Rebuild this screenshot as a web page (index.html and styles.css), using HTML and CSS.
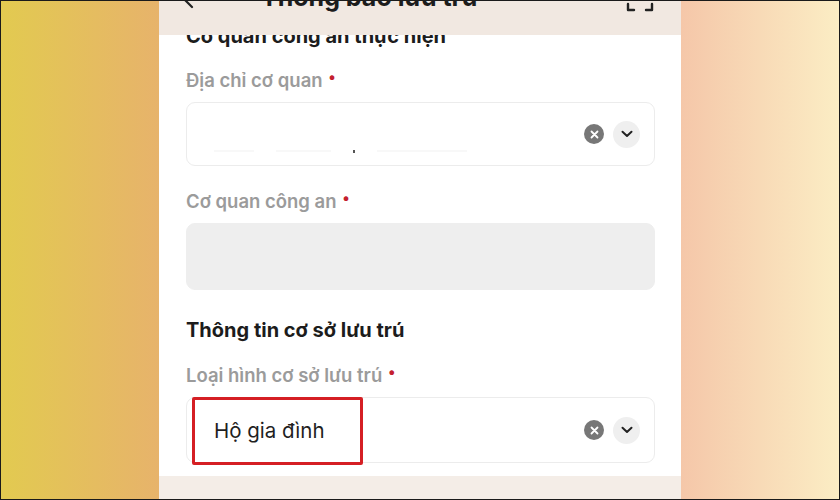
FILE: index.html
```html
<!doctype html>
<html lang="vi">
<head>
    <meta charset="UTF-8">
    <title>Thông báo lưu trú</title>
    <link rel="stylesheet" href="styles.css">
</head>
<body>
<div class="frame">
    <div class="side left"></div>
    <div class="phone">
        <div class="topbar">
            <svg class="back" width="14" height="12" viewBox="0 0 14 12"><path d="M11 -8 L3 0 L9 6" fill="none" stroke="#222" stroke-width="2.2" stroke-linecap="round"/></svg>
            <div class="title">Thông báo lưu trú</div>
            <svg class="expand" width="30" height="14" viewBox="0 0 30 14"><path d="M3 3 V9 H9 M27 3 V9 H21" fill="none" stroke="#222" stroke-width="2.4" stroke-linecap="round" stroke-linejoin="round"/></svg>
        </div>
        <div class="form">
            <h2 class="sec first">Cơ quan công an thực hiện</h2>

            <div class="label">Địa chỉ cơ quan <span class="req">•</span></div>
            <div class="field">
                <div class="blur">
                    <i></i><i class="w2"></i><i class="dot"></i><i class="w3"></i>
                </div>
                <span class="clear">
                    <svg width="9" height="9" viewBox="0 0 9 9"><path d="M1.5 1.5 L7.5 7.5 M7.5 1.5 L1.5 7.5" stroke="#fff" stroke-width="1.8" stroke-linecap="round"/></svg>
                </span>
                <span class="drop">
                    <svg width="12" height="8" viewBox="0 0 12 8"><path d="M1.5 1.8 L6 6 L10.5 1.8" fill="none" stroke="#222" stroke-width="2" stroke-linecap="round" stroke-linejoin="round"/></svg>
                </span>
            </div>

            <div class="label">Cơ quan công an <span class="req">•</span></div>
            <div class="field disabled"></div>

            <h2 class="sec">Thông tin cơ sở lưu trú</h2>

            <div class="label">Loại hình cơ sở lưu trú <span class="req">•</span></div>
            <div class="field sel">
                <div class="value">Hộ gia đình</div>
                <span class="clear">
                    <svg width="9" height="9" viewBox="0 0 9 9"><path d="M1.5 1.5 L7.5 7.5 M7.5 1.5 L1.5 7.5" stroke="#fff" stroke-width="1.8" stroke-linecap="round"/></svg>
                </span>
                <span class="drop">
                    <svg width="12" height="8" viewBox="0 0 12 8"><path d="M1.5 1.8 L6 6 L10.5 1.8" fill="none" stroke="#222" stroke-width="2" stroke-linecap="round" stroke-linejoin="round"/></svg>
                </span>
                <div class="mark"></div>
            </div>
        </div>
        <div class="bottombar"></div>
    </div>
    <div class="side right"></div>
</div>
</body>
</html>
```

FILE: styles.css
```css
*{
    margin: 0;
    padding: 0;
    box-sizing: border-box;
}
body{
    width: 840px;
    height: 500px;
    overflow: hidden;
    font-family: Inter, "Noto Sans", sans-serif;
}
.frame{
    display: flex;
    width: 840px;
    height: 500px;
    border: 1px solid #1a1a1a;
}
.side{
    width: 158px;
}
.side.left{
    background: linear-gradient(to right, #e2ca50, #e7b36b);
}
.side.right{
    background: linear-gradient(to right, #f5c7a9, #fbedc4);
}
.phone{
    width: 522px;
    background: #fff;
    position: relative;
    display: flex;
    flex-direction: column;
}
.topbar{
    position: absolute;
    left: 0;
    top: 0;
    width: 100%;
    height: 34px;
    background: #f1e8e1;
    z-index: 5;
}
.topbar .back{
    position: absolute;
    left: 24px;
    top: 0;
}
.topbar .title{
    position: absolute;
    left: 102px;
    top: -19px;
    font-size: 25px;
    font-weight: 700;
    color: #1c1c1c;
}
.topbar .expand{
    position: absolute;
    left: 466px;
    top: 0;
}
.form{
    flex: 1;
    padding: 24px 26px 0 27px;
}
.sec{
    font-size: 20px;
    font-weight: 700;
    color: #1c1c1c;
    line-height: 22px;
    margin-top: 29px;
}
.sec.first{
    margin-top: 0;
}
.label{
    font-size: 18.5px;
    font-weight: 600;
    color: #9b9b9b;
    line-height: 22px;
    margin-top: 24px;
}
.sec.first + .label{
    margin-top: 22px;
}
.sec + .label{
    margin-top: 23px;
}
.req{
    color: #c4202e;
    font-size: 15px;
    position: relative;
    top: -5px;
    margin-left: 1px;
}
.field{
    margin-top: 9px;
    height: 64px;
    border: 1px solid #ececec;
    border-radius: 9px;
    display: flex;
    align-items: center;
    padding: 0 14px 0 27px;
    position: relative;
}
.field.disabled{
    background: #eeeeee;
    border-color: #eeeeee;
    height: 67px;
}
.field.sel{
    height: 66px;
}
.blur{
    flex: 1;
    display: flex;
    gap: 22px;
    align-items: center;
    margin-top: 34px;
}
.blur i{
    display: block;
    width: 40px;
    height: 2px;
    background: #f8f8f8;
}
.blur i.w2{
    width: 55px;
}
.blur i.dot{
    width: 2px;
    height: 3px;
    background: #555;
}
.blur i.w3{
    width: 90px;
}
.value{
    flex: 1;
    font-size: 20.5px;
    color: #1f1f1f;
}
.clear{
    width: 20px;
    height: 20px;
    border-radius: 50%;
    background: #777;
    display: flex;
    align-items: center;
    justify-content: center;
    margin-right: 9px;
}
.drop{
    width: 27px;
    height: 27px;
    border-radius: 50%;
    background: #efefef;
    display: flex;
    align-items: center;
    justify-content: center;
}
.mark{
    position: absolute;
    left: 5px;
    top: -1px;
    width: 171px;
    height: 68px;
    border: 3px solid #d51f24;
    border-radius: 2px;
}
.bottombar{
    height: 23px;
    background: #f4ede7;
}
```
